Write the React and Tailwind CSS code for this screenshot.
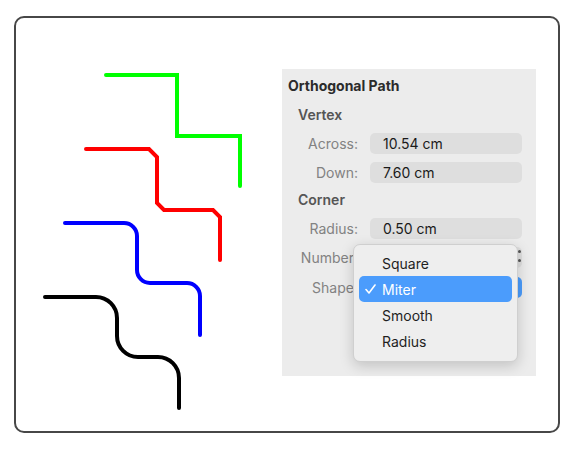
import React from 'react';

const font = { fontFamily: 'Inter, "Liberation Sans", sans-serif' };

function Row({ label, children, className = '' }) {
  return (
    <div className={`flex items-center h-[21px] ${className}`}>
      <span className="w-[76px] text-right text-[14px] text-[#828282] whitespace-nowrap">{label}</span>
      <div className="ml-[12px] w-[152px] h-[21px] relative">{children}</div>
    </div>
  );
}

function Field({ value }) {
  return (
    <div className="w-full h-full rounded-[5px] bg-[#dedede] pl-[13px] flex items-center text-[14px] text-[#1a1a1a]">
      {value}
    </div>
  );
}

function Paths() {
  return (
    <svg width="266" height="413" viewBox="16 18 266 413" fill="none" strokeWidth="4" strokeLinecap="round" className="shrink-0">
      <path d="M106 75 H177 V136 H240 V186" stroke="#00ff00" strokeLinejoin="miter" />
      <path d="M86 149 H149 L157 157 V203 L164 210 H213 L220 217 V260" stroke="#ff0000" strokeLinejoin="miter" />
      <path d="M65 223 H124 A13 13 0 0 1 137 236 V270 A13 13 0 0 0 150 283 H187 A13 13 0 0 1 200 296 V335" stroke="#0000ff" />
      <path d="M45 297 H96 A21 21 0 0 1 117 318 V336 A21 21 0 0 0 138 357 H158 A21 21 0 0 1 179 378 V408" stroke="#000000" />
    </svg>
  );
}

function Menu() {
  const items = ['Square', 'Miter', 'Smooth', 'Radius'];
  return (
    <div className="absolute left-[71px] top-[175px] w-[165px] h-[118px] rounded-[7px] bg-[#eeeeee] border border-[#cfcfcf] shadow-[0_4px_14px_rgba(0,0,0,0.18)] pt-[5px] px-[5px]">
      {items.map((it) => {
        const on = it === 'Miter';
        return (
          <div
            key={it}
            className={`relative h-[26px] flex items-center pl-[23px] rounded-[5px] text-[14px] ${
              on ? 'bg-[#4b9cfc] text-white' : 'text-[#1f1f1f]'
            }`}
          >
            {on && (
              <svg className="absolute left-[6px] top-[8px]" width="11" height="10" viewBox="0 0 11 10" fill="none">
                <path d="M1 5.5 L4 9 L10 1" stroke="white" strokeWidth="1.6" strokeLinecap="round" strokeLinejoin="round" />
              </svg>
            )}
            {it}
          </div>
        );
      })}
    </div>
  );
}

export default function App() {
  return (
    <div className="w-[580px] h-[460px] bg-white pt-[16px] pl-[14px]" style={font}>
      <div className="w-[546px] h-[417px] border-2 border-[#474747] rounded-[10px] flex">
        <Paths />
        <div className="relative mt-[51px] w-[254px] h-[307px] bg-[#ececec] pt-[9px]">
          <div className="pl-[6px] h-[16px] leading-[16px] text-[14px] font-bold text-[#2b2b2b]">Orthogonal Path</div>
          <div className="pl-[16px] mt-[13px] h-[16px] leading-[16px] text-[14px] font-semibold text-[#555]">Vertex</div>
          <Row label="Across:" className="mt-[10px]"><Field value="10.54 cm" /></Row>
          <Row label="Down:" className="mt-[8px]"><Field value="7.60 cm" /></Row>
          <div className="pl-[16px] mt-[9px] h-[16px] leading-[16px] text-[14px] font-semibold text-[#555]">Corner</div>
          <Row label="Radius:" className="mt-[10px]"><Field value="0.50 cm" /></Row>
          <Row label="Number:" className="mt-[8px]">
            <Field value="" />
            <div className="absolute right-[1px] top-[3px] flex flex-col gap-[6px]">
              <span className="block w-[3px] h-[3px] rounded-full bg-[#555]" />
              <span className="block w-[3px] h-[3px] rounded-full bg-[#555]" />
            </div>
          </Row>
          <Row label="Shape:" className="mt-[9px]">
            <div className="w-full h-full rounded-[5px] bg-[#dedede] flex justify-end">
              <div className="w-[18px] h-full rounded-[5px] bg-[#4b9cfc]" />
            </div>
          </Row>
          <Menu />
        </div>
      </div>
    </div>
  );
}
